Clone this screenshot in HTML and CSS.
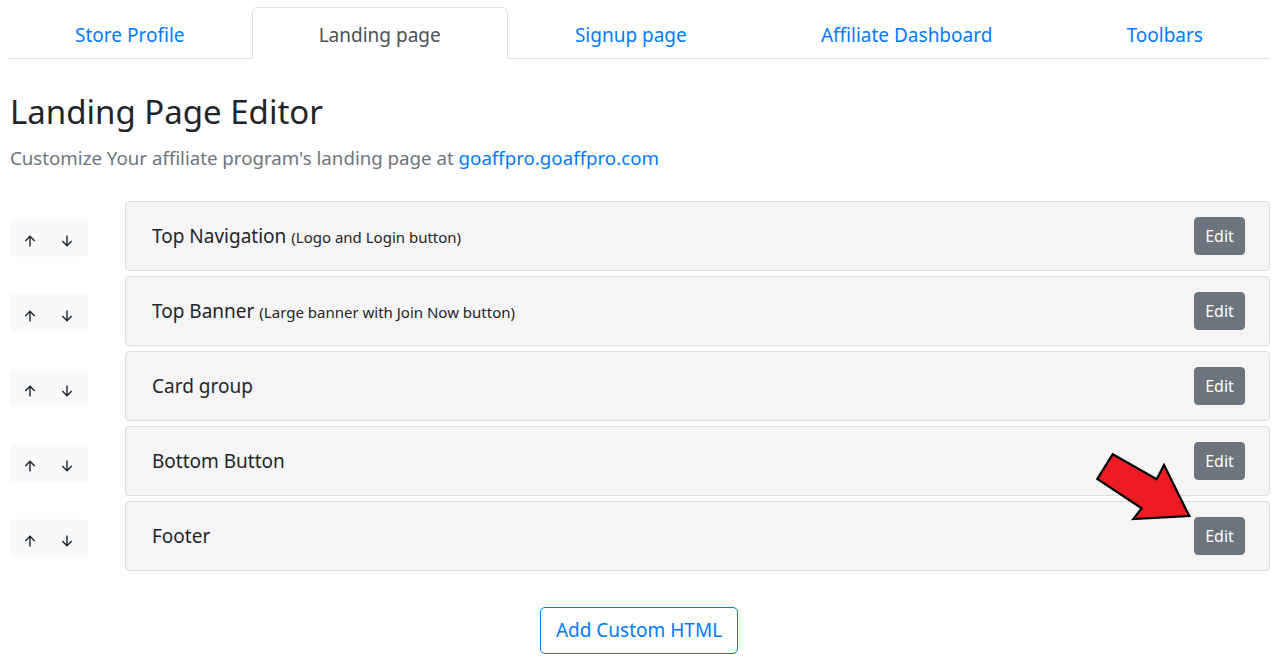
FILE: index.html
```html
<!DOCTYPE html>
<html lang="en">
<head>
<meta charset="utf-8">
<title>Landing Page Editor</title>
<link rel="stylesheet" href="styles.css">
</head>
<body>
<div class="container">
  <nav class="tabs">
    <a class="tab">Store Profile</a>
    <a class="tab active">Landing page</a>
    <a class="tab">Signup page</a>
    <a class="tab">Affiliate Dashboard</a>
    <a class="tab">Toolbars</a>
  </nav>

  <h2 class="title">Landing Page Editor</h2>
  <p class="subtitle">Customize Your affiliate program's landing page at <a class="link">goaffpro.goaffpro.com</a></p>

  <div class="sections">
    <div class="row">
      <div class="movers">
        <svg class="mv" viewBox="0 0 12 12"><path d="M6 11.5V1.2M1.3 5.9L6 1.2l4.7 4.7"/></svg>
        <svg class="mv" viewBox="0 0 12 12"><path d="M6 0.5v10.3M1.3 6.1L6 10.8l4.7-4.7"/></svg>
      </div>
      <div class="card"><div class="card-title">Top Navigation <small>(Logo and Login button)</small></div><button class="edit">Edit</button></div>
    </div>
    <div class="row">
      <div class="movers">
        <svg class="mv" viewBox="0 0 12 12"><path d="M6 11.5V1.2M1.3 5.9L6 1.2l4.7 4.7"/></svg>
        <svg class="mv" viewBox="0 0 12 12"><path d="M6 0.5v10.3M1.3 6.1L6 10.8l4.7-4.7"/></svg>
      </div>
      <div class="card"><div class="card-title">Top Banner <small>(Large banner with Join Now button)</small></div><button class="edit">Edit</button></div>
    </div>
    <div class="row">
      <div class="movers">
        <svg class="mv" viewBox="0 0 12 12"><path d="M6 11.5V1.2M1.3 5.9L6 1.2l4.7 4.7"/></svg>
        <svg class="mv" viewBox="0 0 12 12"><path d="M6 0.5v10.3M1.3 6.1L6 10.8l4.7-4.7"/></svg>
      </div>
      <div class="card"><div class="card-title">Card group</div><button class="edit">Edit</button></div>
    </div>
    <div class="row">
      <div class="movers">
        <svg class="mv" viewBox="0 0 12 12"><path d="M6 11.5V1.2M1.3 5.9L6 1.2l4.7 4.7"/></svg>
        <svg class="mv" viewBox="0 0 12 12"><path d="M6 0.5v10.3M1.3 6.1L6 10.8l4.7-4.7"/></svg>
      </div>
      <div class="card"><div class="card-title">Bottom Button</div><button class="edit">Edit</button></div>
    </div>
    <div class="row">
      <div class="movers">
        <svg class="mv" viewBox="0 0 12 12"><path d="M6 11.5V1.2M1.3 5.9L6 1.2l4.7 4.7"/></svg>
        <svg class="mv" viewBox="0 0 12 12"><path d="M6 0.5v10.3M1.3 6.1L6 10.8l4.7-4.7"/></svg>
      </div>
      <div class="card"><div class="card-title">Footer</div><button class="edit">Edit</button></div>
    </div>
    <svg class="pointer" width="100" height="76" viewBox="0 0 100 76">
      <polygon points="19.7,5.3 63.7,30.3 71,16 96.3,67 40.3,70 48.7,59.3 4.3,30" fill="#ed1c24" stroke="#000" stroke-width="2.2" stroke-linejoin="miter"/>
    </svg>
  </div>

  <div class="add-wrap"><button class="add">Add Custom HTML</button></div>
</div>
</body>
</html>
```
FILE: styles.css
```css
* { box-sizing: border-box; }
body {
  margin: 0;
  font-family: "Noto Sans", "Open Sans", sans-serif;
  color: #212529;
  background: #fff;
}
.container { padding: 7px 8px 0 8px; }
.tabs {
  display: flex;
  border-bottom: 1px solid #dee2e6;
}
.tab {
  flex: 1 1 auto;
  text-align: center;
  font-size: 19px;
  line-height: 28px;
  padding: 13px 16px 9px;
  color: #007bff;
  border: 1px solid transparent;
  border-top-left-radius: 5px;
  border-top-right-radius: 5px;
  margin-bottom: -1px;
}
.tab.active {
  color: #495057;
  border-color: #dee2e6 #dee2e6 #fff;
  background: #fff;
}
.title {
  font-weight: 400;
  font-size: 33px;
  line-height: 40px;
  margin: 33px 0 0 2px;
}
.subtitle {
  margin: 12px 0 0 2px;
  font-size: 18.7px;
  line-height: 27px;
  color: #6c757d;
}
.link { color: #007bff; }
.sections {
  position: relative;
  margin-top: 30px;
  display: flex;
  flex-direction: column;
  gap: 5px;
}
.row { display: flex; align-items: center; }
.movers {
  width: 78px;
  height: 38px;
  margin: 4px 37px 0 2px;
  background: #f8f9fa;
  border-radius: 4px;
  display: flex;
  align-items: center;
  padding: 6px 0 0 14px;
  gap: 25px;
}
.mv {
  width: 12px;
  height: 12px;
  fill: none;
  stroke: #212529;
  stroke-width: 1.4;
}
.card {
  flex: 1;
  height: 70px;
  background: #f5f5f5;
  border: 1px solid #dcdcdc;
  border-radius: 4px;
  display: flex;
  align-items: center;
  justify-content: space-between;
  padding: 0 24px 0 26px;
}
.card-title { font-size: 19px; }
.card-title small { font-size: 15px; }
.edit {
  font-family: inherit;
  font-size: 16px;
  line-height: 24px;
  color: #fff;
  background: #6c757d;
  border: 1px solid #6c757d;
  border-radius: 4px;
  padding: 6px 9px;
  width: 51px;
  height: 38px;
}
.pointer {
  position: absolute;
  left: 1085px;
  top: 248px;
}
.add-wrap { display: flex; justify-content: center; margin-top: 36px; }
.add {
  font-family: inherit;
  font-size: 19px;
  line-height: 29px;
  padding: 8px 15px;
  color: #007bff;
  background: #fff;
  border: 1px solid #007bff;
  border-radius: 5px;
}
```
